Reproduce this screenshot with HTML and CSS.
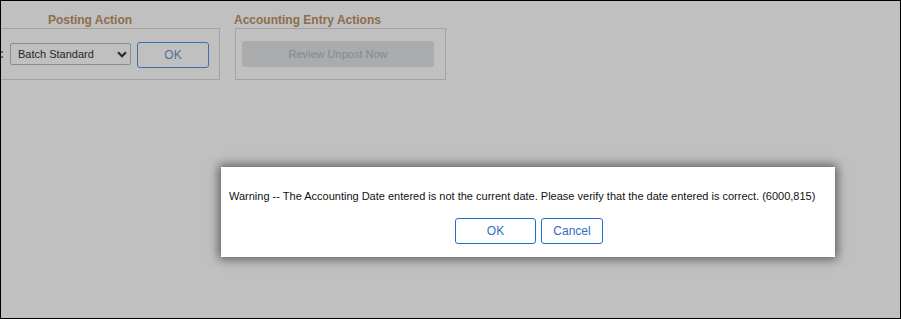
FILE: index.html
```html
<!DOCTYPE html>
<html>
<head>
<meta charset="utf-8">
<link rel="stylesheet" href="styles.css">
</head>
<body>
<div class="frame">
  <div class="toolbar">
    <section class="group group-posting">
      <h2 class="group-title">Posting Action</h2>
      <div class="group-box">
        <span class="colon">:</span>
        <div class="select">
          <span>Batch Standard</span>
          <svg class="chev" width="10" height="7" viewBox="0 0 10 7"><path d="M1 1.2 L5 5.2 L9 1.2" fill="none" stroke="#2a2a2a" stroke-width="2.2"/></svg>
        </div>
        <button class="btn btn-dim">OK</button>
      </div>
    </section>
    <section class="group group-acct">
      <h2 class="group-title">Accounting Entry Actions</h2>
      <div class="group-box">
        <button class="btn-disabled">Review Unpost Now</button>
      </div>
    </section>
  </div>

  <div class="dialog">
    <p class="msg">Warning -- The Accounting Date entered is not the current date. Please verify that the date entered is correct. (6000,815)</p>
    <div class="actions">
      <button class="btn btn-ok">OK</button>
      <button class="btn btn-cancel">Cancel</button>
    </div>
  </div>
</div>
</body>
</html>
```

FILE: styles.css
```css
html, body {
  margin: 0;
  padding: 0;
  background: #c0c0c0;
}
.frame {
  position: relative;
  width: 901px;
  height: 319px;
  box-sizing: border-box;
  border: 1px solid #000;
  background: #c0c0c0;
  overflow: hidden;
  font-family: "Liberation Sans", Arial, sans-serif;
}
.toolbar {
  display: flex;
  align-items: flex-start;
  gap: 15px;
  padding-top: 11px;
}
.group-title {
  margin: 0;
  font-size: 12px;
  font-weight: bold;
  color: #8f6d4b;
  line-height: 16px;
  height: 16px;
}
.group-posting {
  margin-left: -41px;
  width: 260px;
}
.group-posting .group-title {
  text-align: center;
}
.group-acct {
  width: 211px;
}
.group-acct .group-title {
  margin-left: -1px;
}
.group-box {
  box-sizing: border-box;
  height: 52px;
  border: 1px solid #a3a3a3;
  display: flex;
  align-items: center;
}
.group-posting .group-box {
  padding-left: 39px;
}
.colon {
  font-size: 12px;
  font-weight: bold;
  color: #4a4a4a;
  width: 10px;
}
.select {
  box-sizing: border-box;
  width: 121px;
  height: 22px;
  border: 1px solid #8c8c8c;
  border-radius: 2px;
  display: flex;
  align-items: center;
  justify-content: space-between;
  padding: 0 3px 0 7px;
  font-size: 11px;
  color: #262626;
}
.chev { margin-top: 1px; }
.btn {
  box-sizing: border-box;
  font-family: "Liberation Sans", Arial, sans-serif;
  font-size: 11px;
  border-radius: 3px;
  border: 1px solid #1f6fd1;
  background: #fff;
  color: #2f6cc9;
  height: 26px;
  padding: 0;
  cursor: pointer;
}
.btn-dim {
  width: 72px;
  margin-left: 6px;
  margin-top: 1px;
  border-color: #3d6fae;
  background: #c0c0c0;
  color: #4f6f9a;
  font-size: 12px;
}
.group-acct .group-box {
  padding-left: 6px;
}
.btn-disabled {
  box-sizing: border-box;
  width: 192px;
  height: 26px;
  border: none;
  border-radius: 3px;
  background: #a9abad;
  color: #86898c;
  font-family: "Liberation Sans", Arial, sans-serif;
  font-size: 11px;
  padding: 0;
  margin-top: -1px;
}
.dialog {
  position: absolute;
  left: 220px;
  top: 166px;
  width: 614px;
  height: 90px;
  box-sizing: border-box;
  background: #fff;
  box-shadow: 0 0 10px 2px rgba(0,0,0,0.55);
  padding: 21px 8px 0 8px;
}
.msg {
  margin: 0;
  font-size: 11px;
  line-height: 16px;
  color: #111;
  white-space: nowrap;
}
.actions {
  display: flex;
  justify-content: center;
  gap: 5px;
  margin-top: 14px;
  padding-left: 2px;
}
.btn-ok { width: 81px; font-size: 12px; }
.btn-cancel { width: 62px; font-size: 12px; }
```
